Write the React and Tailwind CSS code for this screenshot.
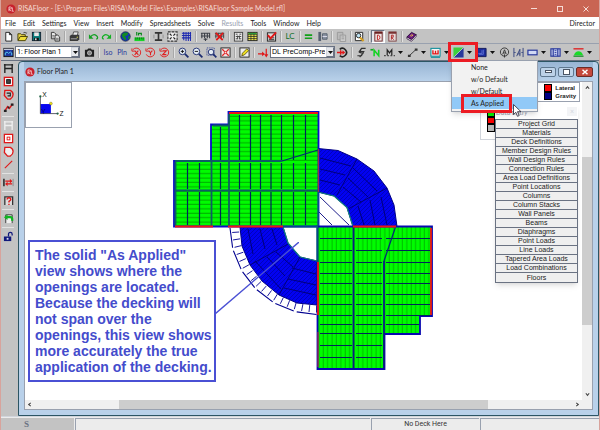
import React, { useState } from 'react';
import clsx from 'clsx';

const menus = ['File', 'Edit', 'Settings', 'View', 'Insert', 'Modify', 'Spreadsheets', 'Solve', 'Results', 'Tools', 'Window', 'Help'];

const spreadsheets = [
  'Project Grid', 'Materials', 'Deck Definitions', 'Member Design Rules', 'Wall Design Rules',
  'Connection Rules', 'Area Load Definitions', 'Point Locations', 'Columns', 'Column Stacks',
  'Wall Panels', 'Beams', 'Diaphragms', 'Point Loads', 'Line Loads', 'Tapered Area Loads',
  'Load Combinations', 'Floors'
];

const deckViews = ['None', 'w/o Default', 'w/Default', 'As Applied'];

// All glyphs are drawn on a 12 x 12 grid
const glyphs = {
  new: <path d="M3 1.5h4l2.500 2.500v7h-6.500zM7 1.500v2.500h2.500" fill="#fff" stroke="#222" />,
  open: (
    <>
      <path d="M1 10V3h3l1 1h4v2" fill="#e8d44a" stroke="#443c00" />
      <path d="M1 10.500l2.500-4.500H11.500L9 10.500z" fill="#f0de38" stroke="#443c00" />
      <path d="M7 2q2-1.500 3 .5l1-.8" fill="none" stroke="#222" strokeWidth=".8" />
    </>
  ),
  save: (
    <>
      <rect x="1.5" y="1.5" width="9" height="9" fill="#0b7c7c" stroke="#123" />
      <rect x="3.500" y="1.500" width="5" height="4" fill="#e8e8e8" />
      <rect x="3.500" y="7.500" width="5" height="3" fill="#111" />
      <rect x="4.500" y="8" width="1.500" height="2" fill="#fff" />
    </>
  ),
  copy: (
    <>
      <path d="M1.500 1.500h3l2 2v5h-5z" fill="#e6e6e6" stroke="#333" />
      <path d="M5.500 4.500h3l2 2v4.500h-5z" fill="#e6e6e6" stroke="#333" />
      <path d="M2.500 5h2M2.500 6.500h2M6.500 8h3M6.500 9.500h3" stroke="#555" strokeWidth=".8" />
    </>
  ),
  print: (
    <>
      <path d="M4 5l1-4h5L9 5z" fill="#eee" stroke="#333" strokeWidth=".8" />
      <path d="M.8 5.500L2.500 4H11.200V9L9.500 11H.8z" fill="#3a3a3a" />
      <path d="M2 8.500h7" stroke="#aaa" />
      <circle cx="9" cy="6.800" r=".7" fill="#d8d850" />
    </>
  ),
  undo: (
    <>
      <path d="M2.500 6.500Q6 2.500 9 5t0 4" fill="none" stroke="#12a022" strokeWidth="1.400" />
      <path d="M1 3.500v5h5z" fill="#12a022" />
    </>
  ),
  redo: (
    <>
      <path d="M9.500 6.500Q6 2.500 3 5t0 4" fill="none" stroke="#12b022" strokeWidth="1.400" />
      <path d="M11 3.500v5h-5z" fill="#12b022" />
    </>
  ),
  globe: (
    <>
      <circle cx="6" cy="6" r="5.200" fill="#1434b4" stroke="#112" strokeWidth=".6" />
      <path d="M4.500 1.500L9 2 8 4.500 5 6l2 1.500L6 10.500 4 8.500 2.500 6.500 2 4zM9 6l2-.5-.5 3L9 9z" fill="#128a24" />
    </>
  ),
  units: (
    <>
      <path d="M3 1v4M5 5V2.500h3V5M3 1.500h.1" stroke="#0a8a1c" strokeWidth="1.300" fill="none" />
      <rect x=".5" y="7" width="11" height="4" fill="#18d428" />
      <path d="M2 7v2.500M4 7v2M6 7v2.500M8 7v2M10 7v2.500" stroke="#0a5a12" strokeWidth=".8" />
    </>
  ),
  section: (
    <>
      <path d="M2 2h8M2 10h8" stroke="#333" strokeWidth="2" />
      <path d="M6 2v8" stroke="#333" strokeWidth="1.800" />
      <path d="M1 4v4M11 4v4" stroke="#777" strokeWidth=".7" />
    </>
  ),
  expand: (
    <>
      <rect x="1" y="1" width="10" height="10" fill="#eee" stroke="#333" strokeDasharray="3 1" strokeWidth="1.200" />
      <path d="M3 3l2 2M9 3L7 5M3 9l2-2M9 9L7 7" stroke="#222" strokeWidth="1.200" />
    </>
  ),
  grid: <path d="M1 2.500h10M1 5h10M1 7.500h10M3 1v9M5.500 1v10M8 1v10M10.300 1v10" stroke="#1c28b0" fill="none" strokeWidth="1.100" />,
  model: <path d="M1 2.500h10M1 5.500h10M2 2v6M5 2v6M8 2v6M10.500 2v6M6 8v3M4 9h4" stroke="#3c4048" fill="none" strokeWidth="1.200" />,
  modelX: (
    <>
      <path d="M1 2.500h10M1 5.500h10M2 2v6M5 2v6M8 2v6M10.500 2v6" stroke="#444" fill="none" />
      <path d="M2 2l7.500 8M10 2L2.500 10" stroke="#e01818" strokeWidth="1.900" />
    </>
  ),
  calc: (
    <>
      <rect x="1.500" y="1.500" width="9" height="9.500" fill="#e8e8e8" stroke="#444" />
      <path d="M3 3.500h2M7 3.500h2M3 6h6M3 8.500h2M7 8.500h2M5 5v4M7 5v4" stroke="#444" />
    </>
  ),
  table: (
    <>
      <rect x="1" y="1.500" width="10" height="9" fill="#f4ee50" stroke="#222" />
      <path d="M1 4h10M1 6h10M1 8.300h10M4.300 1.500v9M7.600 1.500v9" stroke="#222" strokeWidth=".8" />
      <path d="M1.500 2.800h9" stroke="#2a9a3a" strokeWidth="1.500" />
    </>
  ),
  check: (
    <>
      <rect x="1.500" y="2" width="9" height="9" fill="#ddd" stroke="#222" />
      <path d="M3 9.500h6M3 7.500h6" stroke="#222" />
      <path d="M2 4.500l3 3.500L11 1.500" stroke="#e01818" strokeWidth="2.200" fill="none" />
    </>
  ),
  equal: <path d="M2 4.500h8M2 8h8" stroke="#10a018" strokeWidth="1.700" />,
  member: (
    <>
      <rect x="1.500" y="1" width="3" height="10" fill="#566070" />
      <path d="M6 3h5v6H6z" fill="#8a93a2" stroke="#566070" />
      <path d="M6 6h5" stroke="#dde" />
    </>
  ),
  paste: (
    <>
      <path d="M1.500 1.500h6v8h-6z" fill="#bbb" stroke="#999" />
      <path d="M4.500 4.500h6v7h-6z" fill="#ccc" stroke="#999" />
      <path d="M6 6.500h3M6 8.500h3" stroke="#999" />
    </>
  ),
  find: (
    <>
      <path d="M1.500 1.500h8v9h-8z" fill="#fff" stroke="#222" />
      <circle cx="5" cy="5" r="2.400" fill="#bfe4f4" stroke="#222" />
      <path d="M6.500 7l4 4" stroke="#d8a020" strokeWidth="2.200" />
    </>
  ),
  sheetD: (
    <>
      <rect x="2" y="1" width="8" height="10" fill="#f0e6e6" stroke="#6a2020" />
      <path d="M2 2h8" stroke="#6a2020" strokeWidth="2" />
      <path d="M4.800 4.500v5h1q1.800-.5 1.800-2.500t-1.800-2.500z" fill="none" stroke="#c01818" />
    </>
  ),
  sheetR: (
    <>
      <rect x="2" y="1" width="8" height="10" fill="#e4dada" stroke="#7a4040" />
      <path d="M2 2h8" stroke="#7a3030" strokeWidth="2" />
      <path d="M4.800 9.500v-5h2v2.300h-2l2.500 2.700" fill="none" stroke="#b02828" />
    </>
  ),
  book: (
    <>
      <path d="M1 6.500L6 1.500l5 2.500-5 5.500z" fill="#6a1a80" stroke="#2a0a38" />
      <path d="M1 6.500v2l5 2.700L11 6V4L6 9.500z" fill="#eee" stroke="#2a0a38" strokeWidth=".8" />
      <path d="M4.500 5.500q1.500-2 3-1l-1.500 1.500" fill="none" stroke="#f0d040" />
    </>
  ),
  window: (
    <>
      <rect x="1" y="1.500" width="10" height="9" fill="#1d38a0" stroke="#111" />
      <path d="M1 2.500h10" stroke="#e8e8e8" strokeWidth="1.200" />
      <path d="M2.500 9V6.500l2-1 1.500 1.500 2-1.500 1.500 1V9" fill="none" stroke="#5ad0f0" />
    </>
  ),
  camera: (
    <>
      <path d="M1 3h2.500l1-1.500h3L8.500 3H11v7.500H1z" fill="#222" />
      <circle cx="6" cy="6.500" r="2.300" fill="#888" stroke="#ddd" strokeWidth=".7" />
    </>
  ),
  rotX: (
    <>
      <path d="M2 3a4.800 4.800 0 1 1-.6 5M1 1.500v3h3" fill="none" stroke="#e02020" />
      <path d="M4 4l4 4.500M8 4L4 8.500" stroke="#e02020" strokeWidth="1.200" />
    </>
  ),
  rotY: (
    <>
      <path d="M2 3a4.800 4.800 0 1 1-.6 5M1 1.500v3h3" fill="none" stroke="#e02020" />
      <path d="M4 4l2 2.300L8 4M6 6v3" fill="none" stroke="#e02020" strokeWidth="1.200" />
    </>
  ),
  rotZ: (
    <>
      <path d="M2 3a4.800 4.800 0 1 1-.6 5M1 1.500v3h3" fill="none" stroke="#e02020" />
      <path d="M4 4.200h4L4 8.300h4" fill="none" stroke="#e02020" strokeWidth="1.200" />
    </>
  ),
  zoomIn: (
    <>
      <circle cx="4.800" cy="4.800" r="3.600" fill="#e4ecf4" stroke="#1c2c70" />
      <path d="M7.500 7.500L11.300 11.300" stroke="#1c2c70" strokeWidth="1.900" />
      <path d="M3 4.800h3.600M4.800 3v3.600" stroke="#111" />
    </>
  ),
  zoomOut: (
    <>
      <circle cx="4.800" cy="4.800" r="3.600" fill="#e4ecf4" stroke="#1c2c70" />
      <path d="M7.500 7.500L11.300 11.300" stroke="#1c2c70" strokeWidth="1.900" />
      <path d="M3 4.800h3.600" stroke="#111" />
    </>
  ),
  zoomBox: (
    <>
      <path d="M1 1h8v8H1z" fill="none" stroke="#2a3c90" strokeDasharray="1 1" />
      <circle cx="5.500" cy="5.500" r="3" fill="#e4ecf4" stroke="#1c2c70" />
      <path d="M7.800 7.800l3.500 3.500" stroke="#1c2c70" strokeWidth="1.800" />
    </>
  ),
  fit: (
    <>
      <rect x="1" y="1" width="10" height="10" fill="#f0e4e4" stroke="#222" />
      <path d="M2.500 2.500l2 2M9.500 2.500l-2 2M2.500 9.500l2-2M9.500 9.500l-2-2" stroke="#e02020" strokeWidth="1.400" />
      <rect x="4.700" y="4.700" width="2.600" height="2.600" fill="none" stroke="#e02020" strokeWidth=".8" />
    </>
  ),
  pencil: (
    <>
      <rect x="1" y="1" width="10" height="10" fill="#eee" stroke="#222" />
      <path d="M3 9.500l.8-2.800L8.500 2l2 2-4.700 4.700z" fill="#f0e020" stroke="#443c00" strokeWidth=".8" />
    </>
  ),
  load: (
    <>
      <path d="M0 7.500h6M9 2v7" stroke="#e01818" strokeWidth="1.300" />
      <path d="M4.500 5v5L7.500 7.500zM6.800 8h4.400L9 11.500z" fill="#e01818" />
    </>
  ),
  spin: (
    <>
      <path d="M3 2.500a4.500 4.500 0 1 1 0 7" fill="none" stroke="#222" strokeWidth="1.800" />
      <path d="M0 6h7M4 3.500v5" stroke="#e01818" strokeWidth="1.500" />
      <path d="M6 3.500l3 2.500-3 2.500z" fill="#e01818" />
    </>
  ),
  results: <path d="M10.500 1.500H6L3.500 5H8.500L6 9.500H1.500M6 1.500L4 6l3.500 1L4 11" fill="none" stroke="#333" strokeWidth="1.200" />,
  nodeN: (
    <>
      <path d="M4.500 10V3.500l5 6V3" fill="none" stroke="#14d424" strokeWidth="1.700" />
      <path d="M.5 3h3" stroke="#14a424" strokeWidth="1.800" />
    </>
  ),
  memberM: (
    <>
      <path d="M3.500 9V3L6 6.500 8.500 3V9" fill="none" stroke="#222" strokeWidth="1.300" />
      <path d="M0 9.500h12" stroke="#222" strokeDasharray="2 1.500" />
    </>
  ),
  line: (
    <>
      <path d="M2.500 9.500L9.500 3" stroke="#333" />
      <path d="M1 8.500h3v2.500H1zM8.500 1.500h3V4h-3z" fill="#333" />
    </>
  ),
  wall: (
    <>
      <rect x="1" y="1.500" width="10" height="8.500" fill="#f4f4f4" stroke="#14909c" strokeWidth="1.200" />
      <path d="M3.200 3.500v4h5.600v-4M6 4v3.500" fill="none" stroke="#e01818" strokeWidth="1.500" />
      <path d="M1 11.300h10" stroke="#14909c" strokeWidth="1.100" />
    </>
  ),
  deck: (
    <>
      <path d="M.5 .5h11L.5 11.500z" fill="#3cd03c" />
      <path d="M11.500 .5v11H.5z" fill="#28389c" />
      <path d="M.5 11.500l11-11" stroke="#d8e8d8" strokeWidth=".7" />
    </>
  ),
  slab: (
    <>
      <path d="M1 1.500h10v9H1z" fill="#1c2c9c" stroke="#101858" />
      <path d="M2.500 7h4V3.500M8 3v5H3" fill="none" stroke="#6a80e0" strokeWidth=".8" />
    </>
  ),
  tag: (
    <>
      <circle cx="6" cy="5.500" r="4.500" fill="none" stroke="#333" />
      <path d="M4 8l2-5 2 5M4.700 6.500h2.600M6 8v3.500" fill="none" stroke="#333" />
    </>
  ),
  dims: (
    <>
      <path d="M1 1v10M11 1v10M4 10l3.500-7.500V10M5 7.500h3" fill="none" stroke="#30407c" />
      <path d="M1 6h2M9 6h2" fill="none" stroke="#30407c" strokeWidth=".8" />
    </>
  ),
  panel: <rect x="1" y="3.500" width="10" height="5" fill="#d0d8f4" stroke="#28389c" strokeWidth="1.300" />,
  panels: (
    <>
      <rect x="1" y="2" width="10" height="8" fill="#d0d8f4" stroke="#28389c" strokeWidth="1.300" />
      <path d="M3.500 2v8M8.500 2v8" stroke="#28389c" strokeWidth="1.300" />
      <path d="M5 4h2M5 6h2M5 8h2" stroke="#28389c" />
    </>
  ),
  uplift: (
    <>
      <path d="M.5 2h11" stroke="#e01818" strokeWidth="1.400" />
      <path d="M1 9q1.500-4.500 5-4.500T11 9z" fill="#18dc28" />
      <path d="M.5 10h11" stroke="#0a8a1c" strokeWidth="1.300" />
    </>
  ),
  beam: <path d="M2 1v10M10 1v10M1 2h10M2 6h8" fill="none" stroke="#222" strokeWidth="1.500" />,
  column: (
    <>
      <rect x="1.500" y="1.500" width="9" height="9" fill="#fff" stroke="#e01818" strokeWidth="1.500" />
      <rect x="4" y="4" width="4" height="4" fill="#444" stroke="#111" />
    </>
  ),
  opening: (
    <>
      <path d="M2 1.500h6q3 1.500 3 4.500t-3 5H5L1.500 7z" fill="none" stroke="#e01818" strokeWidth="1.500" />
      <path d="M4 4.500h4v3H5" fill="none" stroke="#222" strokeWidth="1.200" />
    </>
  ),
  brace: (
    <>
      <path d="M1.500 10.500L5 5l2 2 3.500-5" fill="none" stroke="#e01818" strokeWidth="1.600" />
      <path d="M1 8.500h3V11H1zM8.500 1.500h3V4h-3zM5 5h2v2H5z" fill="#222" />
    </>
  ),
  beamOff: <path d="M2 1v10M10 1v10M1 2h10M2 6h8" fill="none" stroke="#eee" strokeWidth="1.500" />,
  square: (
    <>
      <rect x="1.500" y="1.500" width="9" height="9" fill="#fff" stroke="#e01818" strokeWidth="1.400" />
      <rect x="4.500" y="4.500" width="3" height="3" fill="none" stroke="#e01818" />
    </>
  ),
  poly: <path d="M2 1.500h6q3 1.500 3 4.500t-3 5H5L1.500 7z" fill="#eee" stroke="#e01818" strokeWidth="1.400" />,
  slash: <path d="M2 10L10 2" stroke="#e01818" strokeWidth="1.200" />,
  swap: (
    <>
      <path d="M1 2v8" stroke="#333" strokeWidth="1.800" />
      <path d="M11 2v8" stroke="#888" />
      <path d="M2.500 4.500h7M3 7.500h7" stroke="#e01818" strokeWidth="1.400" />
      <path d="M7.500 2v5L10 4.500zM5 5v5L2.500 7.500z" fill="#e01818" />
    </>
  ),
  query: (
    <>
      <path d="M2 11V2h8.500v9" fill="#ddd" stroke="#333" strokeWidth="1.400" />
      <path d="M4.500 5q0-2 2-2t2 2q0 1-2 2v1.300M6.500 9.500v1.500" fill="none" stroke="#e01818" strokeWidth="1.500" />
    </>
  ),
  apply: (
    <>
      <path d="M3 11V2h7v9" fill="#eee" stroke="#333" />
      <path d="M3 4.500h5.500q2 .5 1.500 4" fill="none" stroke="#12b422" strokeWidth="2.400" />
      <path d="M5 1.500v6L1 4.500z" fill="#12b422" />
    </>
  ),
  lock: (
    <>
      <rect x="1" y="6" width="8" height="5" fill="#10187c" />
      <path d="M6 6V3.500q0-2 2-2t2 2V5" fill="none" stroke="#10187c" strokeWidth="1.400" />
      <rect x="4" y="7.500" width="2" height="2" fill="#d8d8e8" />
    </>
  )
};

const mainTools = [
  'new', 'open', 'save', '|', 'copy', '|', 'print', '|', 'undo', 'redo', '|', 'globe', 'units', '|',
  'section', 'expand', 'grid', '|', 'model', 'modelX', '|', 'calc', 'table', '|', 'check', '|', 'LC', '|',
  'equal', 'member', '|', 'paste', '|', 'find', '|', 'sheetD', 'sheetR', '|', 'book'
];
const sideTools = [
  'beam', 'column', 'opening', 'brace', '|', 'beamOff', 'square', 'poly', 'slash', '|',
  'swap', '|', 'query', '|', 'apply', '|', 'lock'
];
const narrowTools = ['redo', 'equal', 'find'];

function Glyph({ name, className }) {
  return (
    <svg viewBox="0 0 12 12" className={clsx('h-[11px] w-[11px]', className)} aria-hidden="true">
      {glyphs[name]}
    </svg>
  );
}

function Tool({ name, narrow, pressed }) {
  return (
    <button
      type="button"
      aria-label={name}
      className={clsx(
        'flex h-[13px] shrink-0 items-center justify-center',
        narrow ? 'w-[13px]' : 'w-[14px]',
        pressed && 'border border-t-gray-500 border-l-gray-500 border-r-white border-b-white bg-gray-200'
      )}
    >
      {name === 'LC' ? <span className="text-[8px] leading-none text-[#107028]">LC</span> : <Glyph name={name} />}
    </button>
  );
}

function TextTool({ children }) {
  return (
    <button type="button" className="flex h-[13px] w-[14px] shrink-0 items-center justify-center text-[7px] leading-none text-[#2a3a9c]">
      {children}
    </button>
  );
}

function Divider() {
  return (
    <span className="flex w-[5px] shrink-0 justify-center">
      <span className="h-[11px] w-[2px] border-l border-[#a8a8a8] bg-[#e2e2e2]" />
    </span>
  );
}

function Caret({ label }) {
  return (
    <button type="button" aria-label={label} className="flex h-[13px] w-[9px] shrink-0 items-center justify-center">
      <svg viewBox="0 0 5 3" className="h-[3px] w-[5px]" aria-hidden="true"><path d="M0 0h5L2.500 3z" fill="#111" /></svg>
    </button>
  );
}

function Combo({ label, value, className }) {
  return (
    <div className="relative w-[65px] shrink-0">
      <select
        aria-label={label}
        defaultValue={value}
        className={clsx('block h-[12px] w-full appearance-none overflow-hidden border border-gray-500 bg-white pr-[9px] pl-px text-[7px] leading-[10px] text-black', className)}
      >
        <option value={value}>{value}</option>
      </select>
      <span className="pointer-events-none absolute top-px right-px flex h-[10px] w-[8px] items-center justify-center border border-gray-300 border-r-gray-500 border-b-gray-500 bg-gray-200">
        <svg viewBox="0 0 5 3" className="h-[3px] w-[5px]" aria-hidden="true"><path d="M0 0h5L2.500 3z" fill="#111" /></svg>
      </span>
    </div>
  );
}

function Logo({ className }) {
  return (
    <svg viewBox="0 0 10 10" className={clsx('h-[10px] w-[10px] shrink-0', className)} aria-hidden="true">
      <circle cx="5" cy="5" r="4.600" fill="#c8202c" />
      <path d="M3 7.200V3h1.500q1.200.2 1 1.200T3 5.200l2 2M6.300 3.500v3.700h1.500" fill="none" stroke="#f4c8c8" strokeWidth=".9" />
    </svg>
  );
}

function DeckMenu({ selected, onSelect }) {
  return (
    <div className="absolute top-[14px] left-0 z-20 w-[87px] border border-gray-400 bg-[#f2f2f2] pb-[2px] shadow-md">
      {deckViews.map((view) => (
        <button
          key={view}
          type="button"
          onClick={() => onSelect(view)}
          className={clsx('relative block h-[12px] w-full pl-[19px] text-left text-[7px] leading-[12px] text-[#222]', view === selected && 'bg-[#91c9f7]')}
        >
          {view}
          {view === selected && <span className="absolute -top-[3px] left-[9px] h-[19px] w-[51px] border-3 border-[#ec1c24]" />}
        </button>
      ))}
      <svg viewBox="0 0 9 13" className="absolute top-[43px] left-[61px] h-[13px] w-[9px]" aria-hidden="true">
        <path d="M.5 .5v10l2.300-2.200 1.700 4 1.700-.8-1.700-3.800H8z" fill="#fff" stroke="#223" strokeWidth=".8" />
      </svg>
    </div>
  );
}

function Lines({ data, ...rest }) {
  return <path d={data.map(([x1, y1, x2, y2]) => `M${x1} ${y1}L${x2} ${y2}`).join('')} fill="none" {...rest} />;
}

const upperJoists = [239.5, 250.5, 260.5, 271, 281.5, 293.5, 305.5].flatMap((x) => [[x, 115, x, 160], [x, 163, x, 189], [x, 192, x, 225]]);
const wingJoists = [187.5, 199.5].flatMap((x) => [[x, 163, x, 189], [x, 192, x, 225]]);
const stubJoists = [[220.5, 127, 220.5, 160], [220.5, 163, 220.5, 189], [220.5, 192, 220.5, 225]];
const lowerJoists = [238.5, 250.5, 262.5, 273.5, 283.5, 294.5, 304.5, 315.5, 324.5, 333.5, 345.5, 357.5].flatMap((y) => {
  const row = [[320, y, 352, y], [356, y, 382, y]];
  if (y < 320) row.push([386, y, 430, y]);
  if (y === 324.5) row.push([386, y, 419, y]);
  return row;
});

// Overhang around the lower left quadrant, swept from the west to the south
const ring = (deg, r) => [318 - r * Math.cos((deg * Math.PI) / 180), 226.5 + r * Math.sin((deg * Math.PI) / 180)];
const overhangTicks = Array.from({ length: 18 }, (_, i) => 4 + i * 5).map((a) => [...ring(a, 79), ...ring(a, 86)]);
const overhangEdge = [1, 16, 31, 46, 61, 76].map((a) => [...ring(a, 88), ...ring(a + 13, 88)]);

function FloorDrawing() {
  return (
    <svg viewBox="165 106 275 270" className="absolute top-[24px] left-[140px] h-[270px] w-[275px]" role="img" aria-label="Floor plan with deck spans">
      <defs>
        <pattern id="deckH" width="8" height="4.400" patternUnits="userSpaceOnUse">
          <rect width="8" height="4.400" fill="#00fc00" />
          <path d="M0 2h8" stroke="#00a000" strokeWidth=".9" />
        </pattern>
        <pattern id="deckV" width="4.400" height="8" patternUnits="userSpaceOnUse">
          <rect width="4.400" height="8" fill="#00fc00" />
          <path d="M2 0v8" stroke="#00a400" strokeWidth=".8" />
        </pattern>
        <pattern id="hatch" width="4" height="4" patternUnits="userSpaceOnUse">
          <rect width="4" height="4" fill="#0202f2" />
          <path d="M-1 5L5 -1" stroke="#0000a8" strokeWidth=".7" />
        </pattern>
      </defs>

      <g stroke="#000084" strokeWidth="1">
        <path d="M318 148.500L338 150.500 357 159 374 171 387 188 394 205 397 226.500H353L347 207.500 334 196 318 192z" fill="url(#hatch)" />
        <path d="M240 227L242 246 250 265 262 281 279 295 297 303 317 305V261L300 257 288 243 283 227z" fill="url(#hatch)" />
      </g>
      <path d="M318 192L334 196 347 207.500 353 226.500M283 227L288 243 300 257 317 261" fill="none" stroke="#128080" strokeWidth="1.200" />
      <Lines
        stroke="#00007c"
        data={[
          [357, 159, 337, 195], [387, 188, 349, 208.5],
          [320, 158, 351, 166], [320, 169, 345, 175], [320, 180, 340, 185],
          [353, 168, 377, 191], [348, 178, 368, 197], [343, 187, 361, 202],
          [381, 197, 387, 225], [370, 200, 375, 225], [358, 206, 364, 225],
          [250, 265, 288, 244], [279, 295, 300, 257],
          [248, 229, 253, 254], [260, 229, 265, 249], [272, 229, 277, 245],
          [255, 261, 281, 289], [267, 257, 285, 276], [276, 252, 293, 267],
          [292, 268, 316, 274], [288, 279, 316, 285], [284, 288, 316, 295]
        ]}
      />
      <Lines stroke="#20208c" data={[[320, 197, 349, 225], [319, 212, 332, 225]]} />
      <Lines stroke="#000090" strokeWidth=".9" data={overhangTicks} />
      <Lines stroke="#000090" strokeWidth="1.100" data={overhangEdge} />

      <path d="M174 161H211V124.500H228.500V112H318.500V226.500H174z" fill="url(#deckH)" stroke="#0c0cc8" strokeWidth="1.800" />
      <path d="M317.500 226.500H432V316H420V334H384.500V369H317.500z" fill="url(#deckV)" stroke="#0808b0" strokeWidth="1.800" />
      <Lines stroke="#00245c" strokeWidth="1.200" data={[...upperJoists, ...wingJoists, ...stubJoists, ...lowerJoists]} />
      <Lines stroke="#0f5c64" strokeWidth="1.800" data={[[175, 161, 282, 161], [175, 190.5, 318, 190.5], [229, 114, 229, 226], [211.5, 161, 211.5, 226], [213, 125.500, 228, 125.500], [175.500, 162, 175.500, 225]]} />
      <Lines stroke="#003070" strokeWidth="1.300" data={[[282, 161, 318, 150], [395.5, 227, 384, 261]]} />
      <Lines stroke="#0c1c80" strokeWidth="1.800" data={[[353.5, 227, 353.5, 369], [384, 261, 384, 369]]} />
      <Lines stroke="#0f7070" strokeWidth="1.200" data={[[283, 227, 318, 227], [317, 226, 317, 262], [318, 192, 318, 226]]} />
      <Lines
        stroke="#f01414"
        strokeWidth="1.800"
        data={[
          [229, 113, 318, 113], [175, 226.500, 213, 226.500], [228, 226.500, 283, 226.500],
          [353, 226.500, 396, 226.500], [431, 228, 431, 315], [318, 262, 318, 315]
        ]}
      />
      <Lines stroke="#a02850" strokeWidth="1.300" data={[[318.500, 149, 318.500, 192], [318, 332, 318, 367]]} />
    </svg>
  );
}

function AxisBox() {
  return (
    <svg viewBox="0 0 47 46" className="absolute top-0 left-0 h-[46px] w-[47px] border border-gray-400 bg-white" role="img" aria-label="Axes">
      <rect x="15" y="22" width="11" height="10" fill="#0606f0" />
      <path d="M15 14V32H33" fill="none" stroke="#445" strokeWidth=".9" />
      <circle cx="15" cy="14" r="1.200" fill="#264" />
      <circle cx="33" cy="32" r="1.200" fill="#264" />
      <circle cx="26" cy="21.500" r="1.500" fill="#f0e020" stroke="#665c00" strokeWidth=".4" />
      <g fontFamily="Liberation Sans, sans-serif" fontSize="7" fill="#111">
        <text x="17" y="15">X</text>
        <text x="35" y="34">Z</text>
        <text x="16" y="32" fill="#000060">Y</text>
      </g>
    </svg>
  );
}

function DataEntry() {
  return (
    <aside className="absolute top-[23px] right-[4px] w-[83px] bg-white shadow-md">
      <div className="flex h-[14px] items-end justify-between pr-px pb-[3px] pl-px text-[7px] leading-[8px] text-gray-400">
        <span className="italic">Data Entry</span>
        <button type="button" aria-label="Close data entry" className="h-[9px] w-[10px] bg-gray-100 text-[7px] leading-[9px] text-gray-300">×</button>
      </div>
      <div className="border border-gray-500">
        {spreadsheets.map((name) => (
          <button
            key={name}
            type="button"
            className="block h-[9px] w-full border-b border-gray-500 bg-[#efefef] text-center font-['Liberation_Sans',sans-serif] text-[7px] leading-[8px] whitespace-nowrap text-[#222] last:border-b-0"
          >
            {name}
          </button>
        ))}
      </div>
    </aside>
  );
}

function Legend() {
  return (
    <>
      <div className="absolute top-[18px] right-[80px] h-[40px] w-[22px] border border-gray-300 bg-white pt-[9px] pl-[6px]">
        <div className="h-[7px] w-[8px] border border-black bg-[#00f000]" />
        <div className="h-[7px] w-[8px] border border-black bg-[#f80000]" />
        <div className="h-[8px] w-[8px] border border-black bg-[#b8b8b8]" />
      </div>
      <div className="absolute top-0 right-[2px] flex h-[20px] w-[50px] items-center justify-end gap-[3px] border border-gray-400 bg-white pr-[3px]">
        <div>
          <div className="h-[8px] w-[8px] border border-black bg-[#f80000]" />
          <div className="h-[8px] w-[8px] border border-black bg-[#000084]" />
        </div>
        <div className="font-['Liberation_Sans',sans-serif] text-[6px] leading-[8px] font-bold text-[#222]">
          <div>Lateral</div>
          <div>Gravity</div>
        </div>
      </div>
    </>
  );
}

function Chevron({ className }) {
  return (
    <svg viewBox="0 0 6 6" className={clsx('h-[5px] w-[5px] shrink-0', className)} aria-hidden="true">
      <path d="M1 4.500L3 2l2 2.500" fill="none" stroke="#444" strokeWidth="1.300" />
    </svg>
  );
}

function PlanWindow() {
  return (
    <section className="flex min-w-0 flex-1 flex-col rounded-t-sm border border-[#2c5564] bg-[#b9d1ea] px-[5px] pb-[5px]">
      <header className="flex h-[19px] items-center bg-linear-to-b from-[#98b5d4] to-[#b9d1ea]">
        <Logo className="ml-px" />
        <h2 className="ml-[2px] flex-1 text-[7px] text-[#222]">Floor Plan 1</h2>
        <div className="flex gap-[2px]">
          <button type="button" aria-label="Minimize plan" className="flex h-[10px] w-[16px] items-center justify-center rounded-xs border border-[#5f7890] bg-[#bdd2e8]">
            <span className="h-[3px] w-[7px] border border-gray-600 bg-white" />
          </button>
          <button type="button" aria-label="Maximize plan" className="flex h-[10px] w-[16px] items-center justify-center rounded-xs border border-[#5f7890] bg-[#bdd2e8]">
            <span className="h-[6px] w-[7px] border border-gray-600 bg-white" />
          </button>
          <button type="button" aria-label="Close plan" className="flex h-[10px] w-[17px] items-center justify-center rounded-xs border border-[#6c2c28] bg-[#c4483c]">
            <svg viewBox="0 0 8 6" className="h-[6px] w-[8px]" aria-hidden="true"><path d="M1.500 .8l5 4.400M6.500 .8l-5 4.400" stroke="#fff" strokeWidth="1.500" /></svg>
          </button>
        </div>
      </header>
      <div className="flex flex-1 flex-col border border-gray-400">
        <div className="flex flex-1">
          <div className="relative min-w-0 flex-1 overflow-hidden bg-white">
            <FloorDrawing />
            <AxisBox />
            <Legend />
            <DataEntry />
            <p className="absolute top-[158px] left-[3px] w-[188px] border-2 border-[#4a50d4] py-[5px] pl-[5px] font-['Liberation_Sans',sans-serif] text-[14px] leading-[16px] font-bold whitespace-nowrap text-[#444ccc]">
              The solid "As Applied"<br />view shows where the<br />openings are located.<br />Because the decking will<br />not span over the<br />openings, this view shows<br />more accurately the true<br />application of the decking.
            </p>
            <svg viewBox="0 0 84 72" className="absolute top-[160px] left-[190px] h-[72px] w-[84px]" aria-hidden="true">
              <path d="M0 72L84 0" stroke="#4a50d4" strokeWidth="1.400" />
            </svg>
          </div>
          <div className="flex w-[10px] flex-col items-center bg-[#f0f0f0] py-[3px]">
            <Chevron />
            <div className="mt-[67px] h-[168px] w-full bg-[#cdcdcd]" />
            <Chevron className="mt-auto rotate-180" />
          </div>
        </div>
        <div className="flex h-[9px] items-center bg-[#f0f0f0] pr-[12px] pl-[2px]">
          <Chevron className="-rotate-90" />
          <div className="mr-[87px] ml-[87px] h-full flex-1 bg-[#cdcdcd]" />
          <Chevron className="rotate-90" />
        </div>
      </div>
    </section>
  );
}

function App() {
  const [deckView, setDeckView] = useState('As Applied');

  return (
    <div className="flex min-h-screen flex-col border-x border-[#d8a39c] bg-[#c3c3c3] font-[Lato,sans-serif] text-[7px] leading-none text-black">
      <header className="flex h-[17px] items-center bg-[#c96553] pl-[5px] text-[#f6dcd6]">
        <Logo />
        <h1 className="ml-[2px] flex-1 text-[7px]">RISAFloor - [E:\Program Files\RISA\Model Files\Examples\RISAFloor Sample Model.rfl]</h1>
        <button type="button" aria-label="Minimize" className="flex w-[26px] justify-center"><span className="h-px w-[6px] bg-[#f6dcd6]" /></button>
        <button type="button" aria-label="Maximize" className="flex w-[26px] justify-center"><span className="h-[6px] w-[6px] border border-[#f6dcd6]" /></button>
        <button type="button" aria-label="Close" className="flex w-[26px] justify-center">
          <svg viewBox="0 0 6 6" className="h-[6px] w-[6px]" aria-hidden="true"><path d="M.5 .5l5 5M5.500 .5l-5 5" stroke="#f6dcd6" /></svg>
        </button>
      </header>

      <nav className="flex h-[12px] items-center gap-[7px] bg-white px-1 text-[#222]">
        {menus.map((menu) => (
          <button key={menu} type="button" className={clsx(menu === 'Results' && 'text-gray-400')}>{menu}</button>
        ))}
        <button type="button" className="ml-auto">Director</button>
      </nav>

      <div className="flex h-[15px] items-center border-b border-gray-400">
        {mainTools.map((name, i) => (
          name === '|' ? <Divider key={i} /> : <Tool key={i} name={name} narrow={narrowTools.includes(name)} pressed={name === 'sheetD'} />
        ))}
      </div>

      <div className="flex h-[17px] items-center border-b border-gray-500">
        <Tool name="window" />
        <Combo label="Floor" value="1: Floor Plan 1" className="font-[Roboto,sans-serif]" />
        <span className="w-[2px] shrink-0" />
        <Tool name="camera" />
        <Divider />
        <TextTool>Iso</TextTool>
        <TextTool>Pln</TextTool>
        <Tool name="rotX" />
        <Tool name="rotY" />
        <Tool name="rotZ" />
        <Divider />
        <Tool name="zoomIn" />
        <Tool name="zoomOut" />
        <Tool name="zoomBox" />
        <Tool name="fit" />
        <Divider />
        <Tool name="pencil" />
        <Divider />
        <Tool name="load" />
        <Combo label="Load category" value="DL PreComp-Pre" className="font-['Liberation_Sans',sans-serif]" />
        <Tool name="spin" />
        <Divider />
        <Tool name="results" />
        <Tool name="nodeN" />
        <Tool name="memberM" />
        <Caret label="Member options" />
        <Tool name="line" />
        <Caret label="Line options" />
        <Tool name="wall" />
        <Caret label="Wall options" />
        <div className="relative flex shrink-0">
          <Tool name="deck" />
          <Caret label="Deck options" />
          <DeckMenu selected={deckView} onSelect={setDeckView} />
          <span className="pointer-events-none absolute -top-[4px] -left-[3px] z-30 h-[20px] w-[30px] border-3 border-[#ec1c24]" />
        </div>
        <Tool name="slab" />
        <Caret label="Slab options" />
        <Tool name="tag" />
        <Tool name="dims" />
        <Tool name="panel" />
        <Caret label="Panel options" />
        <Tool name="panels" />
        <Caret label="Panels options" />
        <Tool name="uplift" />
        <Caret label="Uplift options" />
      </div>

      <main className="flex flex-1">
        <div className="flex w-[17px] flex-col items-center pt-px pr-[3px]">
          {sideTools.map((name, i) => (
            name === '|'
              ? <span key={i} className="my-[2px] h-px w-[12px] bg-[#e2e2e2]" />
              : <Tool key={i} name={name} />
          ))}
        </div>
        <PlanWindow />
      </main>

      <footer className="flex h-[14px] items-stretch gap-px border-t border-gray-300 bg-[#ececec] pt-px text-[#333]">
        <div className="w-[73px] bg-[#c3c3c3] pl-[23px] font-['Liberation_Serif',serif] text-[9px] leading-[12px] font-bold text-gray-500">S</div>
        <div className="flex-1 border-t border-l border-gray-400" />
        <div className="w-[108px] border-t border-l border-gray-400 text-center font-[Roboto,sans-serif] text-[7px] leading-[11px]">No Deck Here</div>
        <div className="w-[119px] border-t border-l border-gray-400" />
      </footer>
    </div>
  );
}

export default App;
